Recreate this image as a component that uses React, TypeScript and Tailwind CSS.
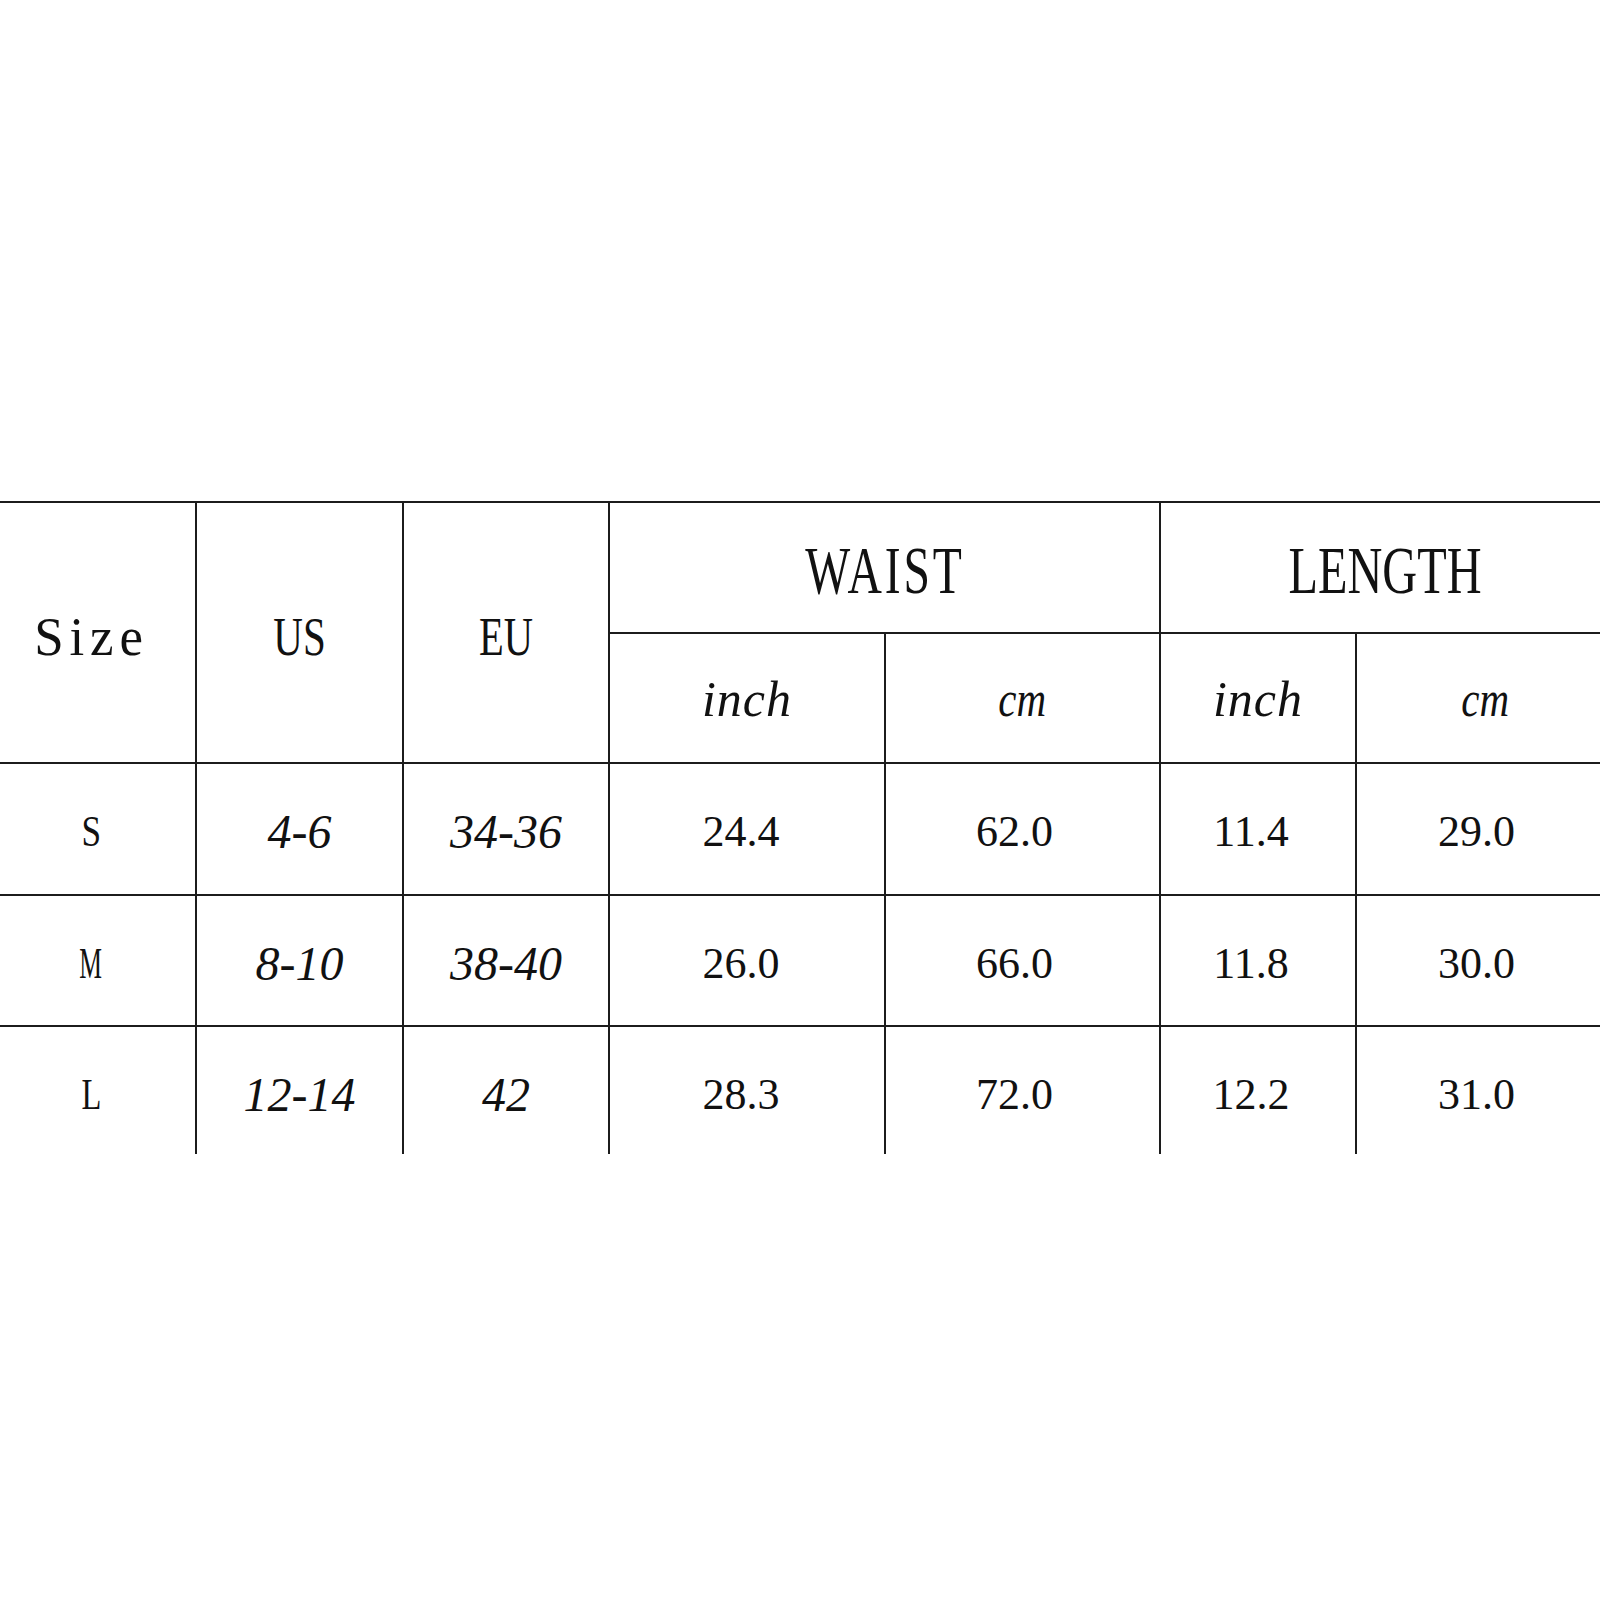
import React from "react";

type SizeRow = {
  label: string;
  labelScale: string;
  us: string;
  eu: string;
  waistIn: string;
  waistCm: string;
  lengthIn: string;
  lengthCm: string;
};

const rows: SizeRow[] = [
  { label: "S", labelScale: "scale-x-[0.8]", us: "4-6", eu: "34-36", waistIn: "24.4", waistCm: "62.0", lengthIn: "11.4", lengthCm: "29.0" },
  { label: "M", labelScale: "scale-x-[0.58]", us: "8-10", eu: "38-40", waistIn: "26.0", waistCm: "66.0", lengthIn: "11.8", lengthCm: "30.0" },
  { label: "L", labelScale: "scale-x-[0.74]", us: "12-14", eu: "42", waistIn: "28.3", waistCm: "72.0", lengthIn: "12.2", lengthCm: "31.0" },
];

const serif = "font-['Liberation_Serif','Times_New_Roman',serif]";
const line = "border-[#1c1c1c]";

function Cell({
  children,
  first,
  className = "",
}: {
  children: React.ReactNode;
  first?: boolean;
  className?: string;
}) {
  return (
    <div
      className={`flex items-center justify-center border-t-2 ${line} ${
        first ? "" : "border-l-2"
      } ${className}`}
    >
      {children}
    </div>
  );
}

export default function App() {
  return (
    <div className="w-[1600px] h-[1600px] bg-white text-[#111] pt-[501px]">
      <div className="grid grid-cols-[195px_207px_206px_276px_275px_196px_245px] grid-rows-[131px_130px_132px_131px_129px]">
        {/* header */}
        <Cell first className="row-span-2 pr-[13px] pt-[8px]">
          <span className={`inline-block ${serif} text-[54px] leading-none tracking-[6px] scale-x-[0.98]`}>
            Size
          </span>
        </Cell>
        <Cell className="row-span-2 pt-[8px]">
          <span className={`inline-block ${serif} text-[54px] leading-none scale-x-[0.76]`}>US</span>
        </Cell>
        <Cell className="row-span-2 pt-[8px]">
          <span className={`inline-block ${serif} text-[54px] leading-none scale-x-[0.75]`}>EU</span>
        </Cell>
        <Cell className="col-span-2 pt-[4px]">
          <span className={`inline-block ${serif} text-[68px] leading-none scale-x-[0.7] tracking-[4px]`}>
            WAIST
          </span>
        </Cell>
        <Cell className="col-span-2 pt-[4px] pl-[8px]">
          <span className={`inline-block ${serif} text-[68px] leading-none scale-x-[0.71]`}>LENGTH</span>
        </Cell>
        <Cell className="pt-[2px]">
          <span className={`inline-block ${serif} italic text-[50px] leading-none tracking-[1px]`}>inch</span>
        </Cell>
        <Cell className="pt-[2px]">
          <span className={`inline-block ${serif} italic text-[50px] leading-none scale-x-[0.82]`}>cm</span>
        </Cell>
        <Cell className="pt-[2px]">
          <span className={`inline-block ${serif} italic text-[50px] leading-none tracking-[1px]`}>inch</span>
        </Cell>
        <Cell className="pt-[2px] pl-[14px]">
          <span className={`inline-block ${serif} italic text-[50px] leading-none scale-x-[0.82]`}>cm</span>
        </Cell>

        {/* body */}
        {rows.map((r, i) => {
          const pad = i === rows.length - 1 ? "pt-[8px]" : "pt-[6px]";
          return (
            <React.Fragment key={r.label}>
              <Cell first className={`pr-[13px] ${pad}`}>
                <span className={`inline-block ${serif} text-[44px] leading-none ${r.labelScale}`}>{r.label}</span>
              </Cell>
              <Cell className={pad}>
                <span className={`inline-block ${serif} italic text-[48px] leading-none`}>{r.us}</span>
              </Cell>
              <Cell className={pad}>
                <span className={`inline-block ${serif} italic text-[48px] leading-none`}>{r.eu}</span>
              </Cell>
              <Cell className={`pr-[12px] ${pad}`}>
                <span className={`inline-block ${serif} text-[44px] leading-none`}>{r.waistIn}</span>
              </Cell>
              <Cell className={`pr-[16px] ${pad}`}>
                <span className={`inline-block ${serif} text-[44px] leading-none`}>{r.waistCm}</span>
              </Cell>
              <Cell className={`pr-[14px] ${pad}`}>
                <span className={`inline-block ${serif} text-[44px] leading-none`}>{r.lengthIn}</span>
              </Cell>
              <Cell className={`pr-[4px] ${pad}`}>
                <span className={`inline-block ${serif} text-[44px] leading-none`}>{r.lengthCm}</span>
              </Cell>
            </React.Fragment>
          );
        })}
      </div>
    </div>
  );
}
